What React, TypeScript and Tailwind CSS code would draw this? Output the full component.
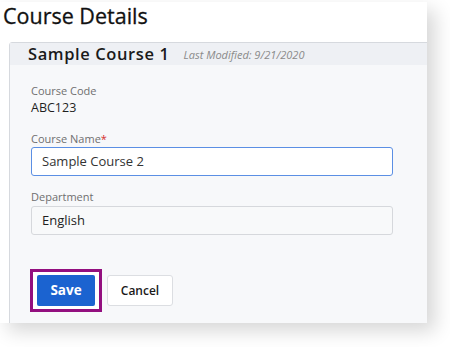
export default function App() {
  return (
    <div className="h-[347px] w-[450px] overflow-hidden bg-white font-['Open_Sans',sans-serif]">
      {/* Screenshot frame */}
      <div className="mt-[2px] h-[321px] w-[427px] overflow-hidden bg-white shadow-[8px_8px_18px_rgba(0,0,0,0.16)]">
        <h1 className="pl-[3px] text-[21.5px] leading-[28px] text-[#111] [-webkit-text-stroke:0.3px_#111]">
          Course Details
        </h1>

        {/* Card */}
        <div className="ml-[9px] mt-[12px] h-[300px] w-[440px] rounded-tl-[3px] border border-[#d6d9de] bg-[#f7f8fa]">
          <div className="flex h-[22px] items-center gap-[14px] bg-[#eef0f4] pl-[18px]">
            <span className="text-[16.5px] font-semibold leading-[22px] tracking-[0.6px] text-[#1a1a1a]">
              Sample Course 1
            </span>
            <span className="pt-[2px] text-[11px] italic text-[#8a8a8a]">Last Modified: 9/21/2020</span>
          </div>

          <div className="pl-[21px] pt-[18px]">
            <div className="text-[11px] leading-[16px] text-[#6f6f6f]">Course Code</div>
            <div className="text-[12.5px] leading-[18px] text-[#1f1f1f]">ABC123</div>

            <div className="mt-[14px] text-[11px] leading-[16px] text-[#6f6f6f]">
              Course Name<span className="text-[#d32f2f]">*</span>
            </div>
            <div className="flex h-[29px] w-[362px] items-center rounded-[3px] border border-[#5b8fe4] bg-white pl-[10px] text-[13px] text-[#333]">
              Sample Course 2
            </div>

            <div className="mt-[13px] text-[11px] leading-[16px] text-[#6f6f6f]">Department</div>
            <div className="mt-[1px] flex h-[29px] w-[362px] items-center rounded-[3px] border border-[#d6d8dc] bg-[#f8f9fa] pl-[10px] text-[13px] text-[#1f1f1f]">
              English
            </div>

            {/* Actions */}
            <div className="mt-[34px] flex items-center gap-[5px]">
              <div className="ml-[-1px] border-[3px] border-[#930f7f] bg-white px-[4px] py-[3px]">
                <button className="h-[31px] w-[58px] rounded-[2px] bg-[#1b63d0] text-[13.5px] font-bold text-white">
                  Save
                </button>
              </div>
              <button className="h-[31px] w-[66px] rounded-[3px] border border-[#dcdee2] bg-white text-[12px] font-semibold text-[#1a1a1a]">
                Cancel
              </button>
            </div>
          </div>
        </div>
      </div>
    </div>
  );
}
